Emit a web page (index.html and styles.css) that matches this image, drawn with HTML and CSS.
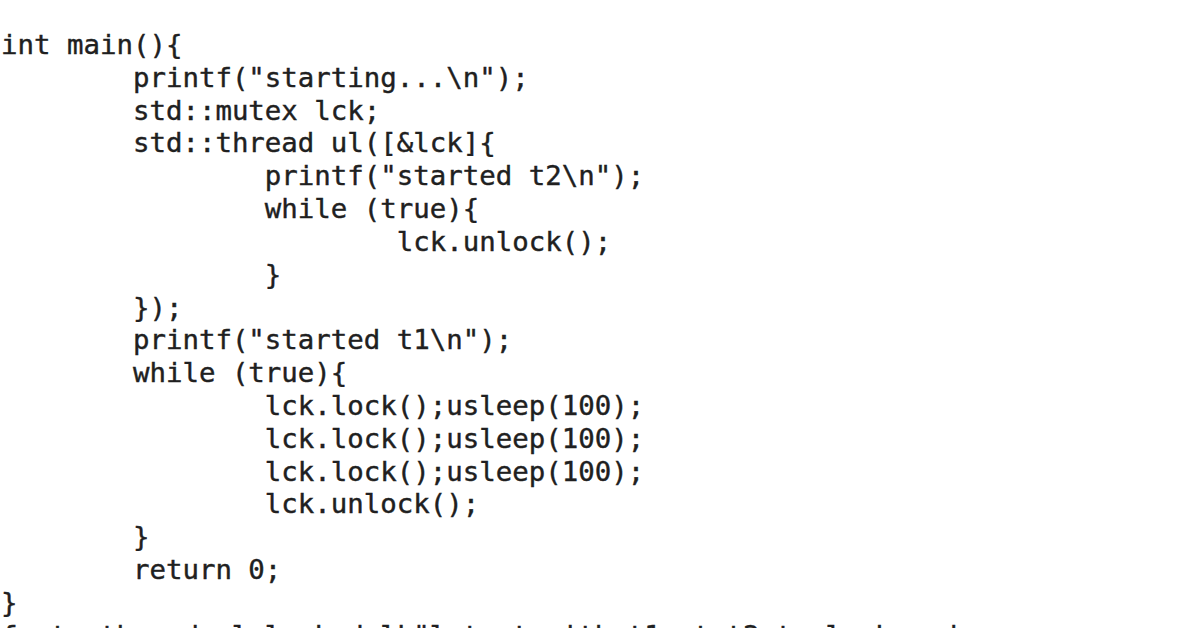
FILE: index.html
```html
<!DOCTYPE html>
<html>
<head>
<meta charset="utf-8">
<link rel="stylesheet" href="styles.css">
</head>
<body>
<main class="snippet">
<pre class="code">int main(){
	printf("starting...\n");
	std::mutex lck;
	std::thread ul([&amp;lck]{
		printf("started t2\n");
		while (true){
			lck.unlock();
		}
	});
	printf("started t1\n");
	while (true){
		lck.lock();usleep(100);
		lck.lock();usleep(100);
		lck.lock();usleep(100);
		lck.unlock();
	}
	return 0;
}
fast: thread ul locked lk"l test with t1 at t2 to lock and</pre>
</main>
</body>
</html>
```
FILE: styles.css
```css
html, body {
  margin: 0;
  padding: 0;
  background: #ffffff;
}
body {
  width: 1196px;
  height: 628px;
  overflow: hidden;
}
.snippet {
  padding: 29px 0 0 1px;
}
.code {
  margin: 0;
  font-family: "DejaVu Sans Mono", "Liberation Mono", monospace;
  font-size: 27.4px;
  line-height: 32.82px;
  color: #202020;
  -webkit-text-stroke: 0.4px #202020;
  white-space: pre;
  tab-size: 8;
  -moz-tab-size: 8;
}
```
